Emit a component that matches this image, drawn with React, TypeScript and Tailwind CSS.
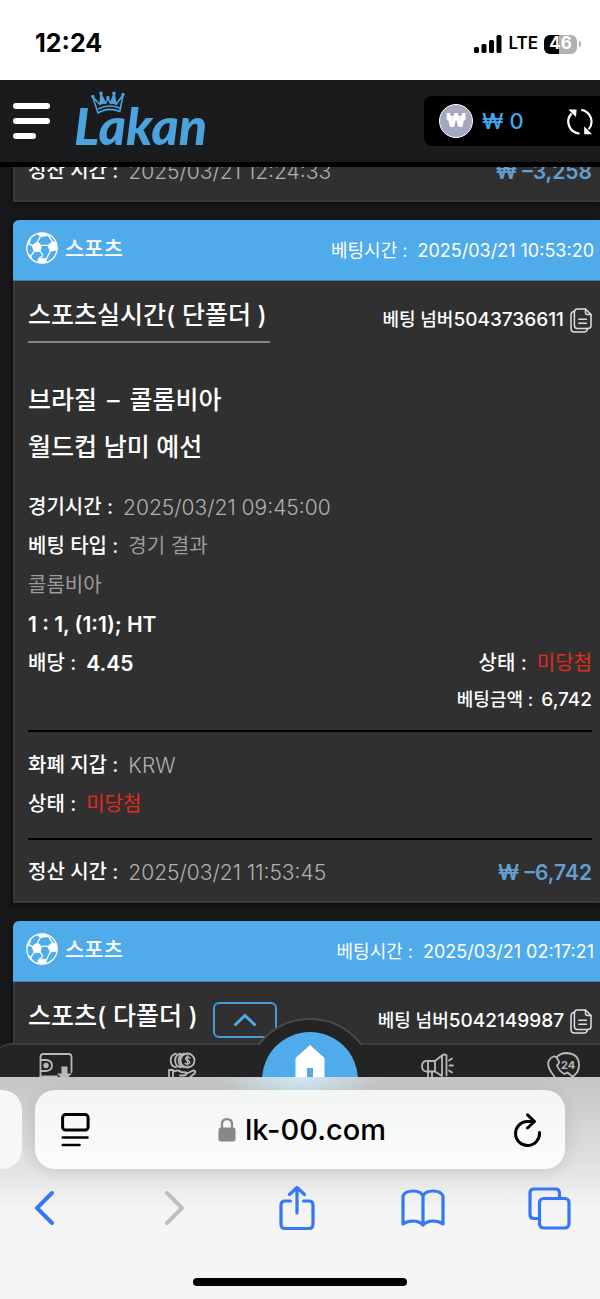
import type { ReactNode } from "react";

interface Bet {
  kind: string;
  placedAt: string;
  betNo: string;
}

const liveBet: Bet = { kind: "스포츠실시간( 단폴더 )", placedAt: "2025/03/21 10:53:20", betNo: "5043736611" };
const multiBet: Bet = { kind: "스포츠( 다폴더 )", placedAt: "2025/03/21 02:17:21", betNo: "5042149987" };

function SoccerBall() {
  return (
    <svg viewBox="0 0 32 32" className="h-8 w-8" fill="none" stroke="#fff" strokeWidth="1.3" aria-hidden="true">
      <circle cx="16" cy="16" r="15.2" />
      <g fill="#fff" strokeWidth="0.8" strokeLinejoin="round">
        <path d="M11.5 9.8 15.6 13.4 14.2 19.4 8 19.6 6.2 13.4Z" />
        <path d="M21.8 13.4 26.4 9.6 30.4 10.6 30.8 18 24.2 19.2Z" />
        <path d="M11 1.8 20 1.2 22.5 3.6 14.5 4.4Z" />
        <path d="M1.2 14 4.6 7 3.2 12Z" />
        <path d="M12.6 26.4 20.6 26.4 20 30.4 15 31 11.6 29.8Z" />
        <path d="M2.6 22.4 5 24.4 6.5 28 3.4 25Z" />
      </g>
      <path d="M11.5 9.8 14.5 4.4M15.6 13.4 21.8 13.4M14.2 19.4 17 23.4M17 23.4 13 26.4M8 19.6 4.8 24M6.2 13.4 3.2 12M22.5 3.6 26.4 9.6M24.2 19.2 20.6 26.4" />
    </svg>
  );
}

function CopyIcon() {
  return (
    <svg viewBox="0 0 22 25" className="h-[25px] w-[22px]" fill="none" stroke="#dedede" strokeWidth="1.5" strokeLinejoin="round" strokeLinecap="round">
      <path d="M7.4 1H15.5L21 6.6V17.4Q21 20.4 18 20.4H7.4Q4.4 20.4 4.4 17.4V4Q4.4 1 7.4 1Z" />
      <path d="M15.5 1V4.6Q15.5 6.6 17.5 6.6H21" />
      <path d="M4.4 3.6Q1 3.8 1 7V20.5Q1 24 4.5 24H14Q17 24 17.4 20.6" />
      <path d="M8.8 11.2H16.4M8.8 15.2H16.4" />
    </svg>
  );
}

function CardHeader({ placedAt }: { placedAt: string }) {
  return (
    <div className="flex h-[61px] items-center justify-between rounded-tl-md border-b border-[#3f7fa8] bg-[#4fabea] pr-[6px] pl-[13px] text-white">
      <div className="flex items-center gap-[7px] pb-1">
        <SoccerBall />
        <span className="text-[21px] font-medium">스포츠</span>
      </div>
      <p className="flex gap-[10px] text-[18px]">
        <span>베팅시간 :</span>
        <span>{placedAt}</span>
      </p>
    </div>
  );
}

function Card({ children, className = "" }: { children: ReactNode; className?: string }) {
  return <article className={`ml-[13px] shadow-[0_2px_6px_rgba(0,0,0,0.6)] ${className}`}>{children}</article>;
}

function CardTitle({ bet, children }: { bet: Bet; children?: ReactNode }) {
  return (
    <div className="flex items-start justify-between">
      <div className="flex items-start gap-[15px]">
        <h2 className="text-[25px] leading-10 font-medium">{bet.kind}</h2>
        {children}
      </div>
      <div className="flex items-center gap-[6px] pt-[5px] leading-10">
        <p className="text-[18px] font-medium">
          베팅 넘버<span className="text-[19px]">{bet.betNo}</span>
        </p>
        <button aria-label="복사">
          <CopyIcon />
        </button>
      </div>
    </div>
  );
}

function Row({ label, children }: { label: string; children: ReactNode }) {
  return (
    <p className="flex gap-[10px]">
      <span className="font-medium">{label} :</span>
      {children}
    </p>
  );
}

function Settlement({ time, amount }: { time: string; amount: string }) {
  return (
    <div className="flex justify-between">
      <Row label="정산 시간">
        <span className="text-[21px] font-light text-[#b0b0b0]">{time}</span>
      </Row>
      <span className="text-[21px] font-semibold text-[#659fd0]">₩ {amount}</span>
    </div>
  );
}

function StatusBar() {
  return (
    <div className="flex h-20 shrink-0 items-center justify-between bg-white pt-2 pr-[19px] pl-[35px] text-black">
      <span className="text-[25px] font-bold">12:24</span>
      <div className="flex items-center gap-[6px]">
        <svg viewBox="0 0 28 18" className="h-[18px] w-7" aria-hidden="true">
          <rect x="0" y="12" width="5" height="6" rx="1.5" />
          <rect x="7.5" y="9" width="5" height="9" rx="1.5" />
          <rect x="15" y="5" width="5" height="13" rx="1.5" />
          <rect x="22.5" y="0" width="5" height="18" rx="1.5" />
        </svg>
        <span className="text-[17px] font-semibold">LTE</span>
        <div className="flex items-center gap-[2px]">
          <div className="flex h-[19px] w-[33px] items-center justify-center rounded-[6px] bg-linear-to-r from-black from-46% to-[#b1b1b1] to-46% text-[17px] font-bold text-white">
            46
          </div>
          <div className="h-[6px] w-[2px] rounded-r-full bg-[#b1b1b1]" />
        </div>
      </div>
    </div>
  );
}

function SiteHeader() {
  return (
    <header className="flex h-[87px] shrink-0 items-center border-b-[5px] border-black bg-[#1a1b1d] pl-[13px]">
      <button aria-label="메뉴" className="flex flex-col gap-[9px]">
        <span className="h-[6px] w-[37px] rounded-full bg-white" />
        <span className="h-[6px] w-[37px] rounded-full bg-white" />
        <span className="h-[6px] w-[23px] rounded-full bg-white" />
      </button>
      <a href="#" className="relative ml-[24px] pt-2 font-[Lato] text-[52px] leading-[52px] font-black text-[#4ba2dc] italic">
        Lakan
        <svg viewBox="0 0 34 24" className="absolute top-0 left-[17px] h-6 w-[34px]" fill="none" stroke="#4ba2dc" strokeWidth="1.6" strokeLinejoin="round">
          <path d="M7 22 1.8 6 9 13.5 10 3 14.5 12.5 17 7 19.5 12.5 23 3 25 13.5 32 4 28.8 20.5Q17 15.5 7 22Z" />
          <path d="M7 18Q17 12.5 29 17" />
          <g fill="#4ba2dc" stroke="none">
            <circle cx="1.8" cy="5.5" r="1.7" />
            <circle cx="10" cy="2.2" r="1.8" />
            <circle cx="17" cy="6.4" r="1.7" />
            <circle cx="23" cy="2.2" r="1.8" />
            <circle cx="32" cy="3.4" r="1.7" />
            <path d="M10 3 14.5 12.5 9 13.5ZM23 3 25 13.5 19.5 12.5Z" />
          </g>
        </svg>
      </a>
      <div className="ml-auto flex h-[50px] w-44 items-center rounded-l-lg bg-black pr-[7px] pl-[15px]">
        <span className="flex h-[34px] w-[34px] items-center justify-center rounded-full border border-white bg-[#a6a8c2] text-[19px] font-black text-white">₩</span>
        <span className="ml-[9px] text-[22px] font-medium text-[#45a6e8]">₩ 0</span>
        <button aria-label="새로고침" className="ml-auto">
          <svg viewBox="0 0 26 27" className="h-[27px] w-[26px]" fill="none" stroke="#fff" strokeWidth="2.2">
            <path d="M12.5 25.6A12 12 0 0 1 4.6 5.4" />
            <path d="M14.3 1.8A12 12 0 0 1 21.6 21.4" />
            <path d="M1.4 1.4H9.6L9 9ZM17.2 18.2V26.2H25Z" fill="#fff" stroke="none" />
          </svg>
        </button>
      </div>
    </header>
  );
}

function NavIcon({ label, children }: { label: string; children: ReactNode }) {
  return (
    <a href="#" aria-label={label} className="flex justify-center">
      <svg viewBox="0 0 34 34" className="h-[34px] w-[34px]" fill="none" stroke="#b9b9b9" strokeWidth="1.8" strokeLinecap="round" strokeLinejoin="round">
        {children}
      </svg>
    </a>
  );
}

function BottomNav() {
  return (
    <nav className="absolute -right-7 bottom-0 -left-2 h-[34px]">
      <div className="absolute inset-0 rounded-tl-[20px] border-t-2 border-[#3b3b3b] bg-[#242424]" />
      <div className="absolute -top-[25px] left-1/2 h-[27px] w-[130px] -translate-x-1/2 overflow-hidden">
        <div className="h-[130px] rounded-full border-2 border-[#4a4a4a] bg-[#242424]" />
      </div>
      <div className="relative grid grid-cols-5 pt-[9px]">
        <NavIcon label="입금">
          <path d="M1.5 8V5Q1.5 2 4.5 2H29.5Q32.5 2 32.5 5V20M1.5 8V27M1.5 8H7Q13 8.5 13 13.5T7 19H1.5" />
          <circle cx="7" cy="13.5" r="1.8" fill="#b9b9b9" />
          <path d="M22.5 14.5H28.5V21.5H33L25.3 29 18 21.5H22.5Z" fill="#b9b9b9" stroke="none" />
          <path d="M1.5 24.5H18" />
        </NavIcon>
        <NavIcon label="출금">
          <circle cx="21.5" cy="8.5" r="7" />
          <path d="M14.5 1.7A7 7 0 0 0 14.5 15.3M10 1.7A7 7 0 0 0 10 15.3M18 1.7A7 7 0 0 0 18 15.3" />
          <path d="M24 6Q21.5 4.2 19.8 6 19 8 21.5 8.5T23.6 11Q21.5 13 19 11.3M21.5 3.7V13.3" strokeWidth="1.4" />
          <path d="M3 18H7V30H3ZM7 20Q12 17 15 20L20 20.5Q21.5 23 18 23.5H14M20 22 27 18.5Q30 18.5 29 21L22 27" />
        </NavIcon>
        <a href="#" aria-label="홈" className="relative flex justify-center">
          <span className="absolute -top-5 flex h-24 w-24 justify-center rounded-full bg-[#4fabea] pt-[13px]">
            <svg viewBox="0 0 30 34" className="h-[34px] w-[30px]" aria-hidden="true">
              <path d="M15 0 29.5 13V34H18V23H12V34H0.5V13Z" fill="#fff" />
            </svg>
          </span>
        </a>
        <NavIcon label="공지">
          <path d="M8 9H15L22 3.5V24L15 19.5H8ZM8 9Q2 8.5 2 14.2T8 19.5M15 9V19.5M22 4.5Q22 2.5 24.5 2.5T26.5 4.5V23.5M8 20V28M12 20V28" />
          <path d="M29 8.5 32 6.5M29.5 13.5H33M29 18.5 32 20.5" />
        </NavIcon>
        <NavIcon label="고객센터">
          <path d="M9.5 5.5Q13 1 20 1 32 2 32 13 32 20 26.5 24" />
          <path d="M6.5 4.5Q9 4 10.5 7L12 9.5Q12.5 11.5 10 13.5 12 19 17.5 22L20.5 20.5 26 25 23 29Q14 32 7 24 -1 14 2 8.5 3.5 5.5 6.5 4.5Z" />
          <text x="21" y="16.5" textAnchor="middle" fontSize="11" fontWeight="700" fill="#b9b9b9" stroke="none">
            24
          </text>
        </NavIcon>
      </div>
    </nav>
  );
}

function BrowserBar() {
  return (
    <footer className="relative flex h-[222px] shrink-0 flex-col overflow-hidden bg-linear-to-b from-[#c5c5c5] via-[#e2e2e2] via-40% to-[#f5f5f5] to-60% text-black">
      <div className="absolute top-0 left-1/2 h-16 w-40 -translate-x-1/2 bg-radial-[at_50%_0%] from-[#cfe9f6] to-transparent to-70%" />
      <div className="relative -ml-10 flex gap-[13px] pt-[13px] pr-[35px]">
        <div className="h-[79px] w-[62px] shrink-0 rounded-[20px] bg-[#f7f7f7]" />
        <div className="flex h-[79px] flex-1 items-center justify-between rounded-[20px] bg-linear-to-b from-[#f3f4f4] to-[#fcfcfc] pr-[23px] pl-[26px] shadow-[0_3px_18px_rgba(0,0,0,0.12)]">
          <button aria-label="페이지 설정">
            <svg viewBox="0 0 29 34" className="h-[34px] w-[29px]" fill="none" stroke="#000" strokeWidth="3" strokeLinecap="round">
              <rect x="1.6" y="1.6" width="25.5" height="15.5" rx="3" />
              <path d="M1.8 24.5H26.5M1.8 32H18.5" strokeWidth="2.6" />
            </svg>
          </button>
          <button className="flex items-center gap-[9px] text-[29px] font-medium">
            <svg viewBox="0 0 18 24" className="h-6 w-[18px]" aria-hidden="true">
              <rect x="0.5" y="9.5" width="17" height="14" rx="2.5" fill="#88878c" />
              <path d="M4 11V6.5Q4 1.2 9 1.2T14 6.5V11" fill="none" stroke="#88878c" strokeWidth="2.2" />
            </svg>
            lk-00.com
          </button>
          <button aria-label="새로고침">
            <svg viewBox="0 0 28 34" className="h-[34px] w-7" fill="none" stroke="#000" strokeWidth="3" strokeLinecap="round" strokeLinejoin="round">
              <path d="M25.5 19.5A12 12 0 1 1 13.5 8.5H20" />
              <path d="M13.5 1.8 20.5 8.5 13.5 15" />
            </svg>
          </button>
        </div>
      </div>
      <div className="relative -mr-[13px] -ml-[19px] grid h-[78px] grid-cols-5 place-items-center text-[#3478f6]">
        <button aria-label="뒤로">
          <svg viewBox="0 0 22 36" className="h-9 w-[22px]" fill="none" stroke="currentColor" strokeWidth="4" strokeLinecap="round" strokeLinejoin="round">
            <path d="M19 3 4 18 19 33" />
          </svg>
        </button>
        <button aria-label="앞으로" className="pl-2 text-[#bfbfbf]">
          <svg viewBox="0 0 22 36" className="h-9 w-[22px]" fill="none" stroke="currentColor" strokeWidth="4" strokeLinecap="round" strokeLinejoin="round">
            <path d="M3 3 18 18 3 33" />
          </svg>
        </button>
        <button aria-label="공유">
          <svg viewBox="0 0 36 46" className="h-[46px] w-9" fill="none" stroke="currentColor" strokeWidth="3.2" strokeLinecap="round" strokeLinejoin="round">
            <path d="M11.5 16H6Q2 16 2 20V39Q2 43.5 6 43.5H30Q34 43.5 34 39V20Q34 16 30 16H24.5" />
            <path d="M18 28V3M10.5 9.5 18 2.5 25.5 9.5" />
          </svg>
        </button>
        <button aria-label="책갈피">
          <svg viewBox="0 0 44 38" className="h-[38px] w-11" fill="none" stroke="currentColor" strokeWidth="3.2" strokeLinejoin="round">
            <path d="M22 7Q20 2 12 2T2 7V35Q6 32 12 32T22 36Q26 32 32 32T42 35V7Q40 2 32 2T22 7V36" />
          </svg>
        </button>
        <button aria-label="탭">
          <svg viewBox="0 0 43 43" className="h-[43px] w-[43px]" fill="none" stroke="currentColor" strokeWidth="3.2">
            <path d="M11 31.5H6Q2 31.5 2 27.5V6Q2 2 6 2H27.5Q31.5 2 31.5 6V11" />
            <rect x="11.5" y="11.5" width="29.5" height="29.5" rx="4" />
          </svg>
        </button>
      </div>
      <div className="mt-auto mb-[13px] h-2 w-[214px] self-center rounded-full bg-black" />
    </footer>
  );
}

export default function App() {
  return (
    <div className="flex h-screen flex-col overflow-hidden bg-[#17181a] font-[Inter,'Noto_Sans_CJK_KR',sans-serif] text-white">
      <StatusBar />
      <SiteHeader />

      <main className="relative min-h-0 flex-1 overflow-hidden text-[20px] leading-[39px]">
        <Card className="-mt-[15px]">
          <div className="border-b-2 border-l-2 border-[#393a3d] bg-[#303030] pr-2 pb-[9px] pl-[13px]">
            <Settlement time="2025/03/21 12:24:33" amount="–3,258" />
          </div>
        </Card>

        <Card className="mt-[18px]">
          <CardHeader placedAt={liveBet.placedAt} />
          <div className="border-b-2 border-l-2 border-[#393a3d] bg-[#303030] pt-[14px] pr-2 pb-[9px] pl-[13px]">
            <CardTitle bet={liveBet} />
            <div className="mt-px w-[242px] border-b-2 border-[#858585]" />

            <div className="mt-[34px] text-[25px] leading-[47px] font-medium">
              <p className="flex gap-[10px]">
                <span>브라질</span>–<span>콜롬비아</span>
              </p>
              <p>월드컵 남미 예선</p>
            </div>

            <div className="mt-[17px]">
              <Row label="경기시간">
                <span className="text-[21px] font-light text-[#b0b0b0]">2025/03/21 09:45:00</span>
              </Row>
              <Row label="베팅 타입">
                <span className="text-[#9c9c9c]">경기 결과</span>
              </Row>
              <p className="text-[#9c9c9c]">콜롬비아</p>
              <p className="text-[21px] font-semibold">1 : 1, (1:1); HT</p>
              <div className="flex justify-between">
                <Row label="배당">
                  <span className="text-[21px] font-semibold">4.45</span>
                </Row>
                <Row label="상태">
                  <span className="text-[#e8291c]">미당첨</span>
                </Row>
              </div>
              <p className="flex justify-end gap-2 text-[18px] leading-[34px] font-medium">
                <span>베팅금액 :</span>
                <span className="text-[19px]">6,742</span>
              </p>
            </div>

            <div className="mt-[13px] border-y-2 border-black py-[14px]">
              <Row label="화폐 지갑">
                <span className="text-[21px] font-light text-[#b0b0b0]">KRW</span>
              </Row>
              <Row label="상태">
                <span className="text-[#e8291c]">미당첨</span>
              </Row>
            </div>

            <div className="pt-[13px]">
              <Settlement time="2025/03/21 11:53:45" amount="–6,742" />
            </div>
          </div>
        </Card>

        <Card className="mt-[18px]">
          <CardHeader placedAt={multiBet.placedAt} />
          <div className="border-l-2 border-[#393a3d] bg-[#303030] pt-[14px] pr-2 pb-20 pl-[13px]">
            <CardTitle bet={multiBet}>
              <button aria-label="접기" className="mt-[6px] flex h-9 w-16 items-center justify-center rounded-md border-2 border-[#459bd6] text-[#4fabea]">
                <svg viewBox="0 0 24 14" className="h-[14px] w-6" fill="none" stroke="currentColor" strokeWidth="3">
                  <path d="M1.5 12.5 12 2.5 22.5 12.5" />
                </svg>
              </button>
            </CardTitle>
          </div>
        </Card>

        <BottomNav />
      </main>

      <BrowserBar />
    </div>
  );
}
